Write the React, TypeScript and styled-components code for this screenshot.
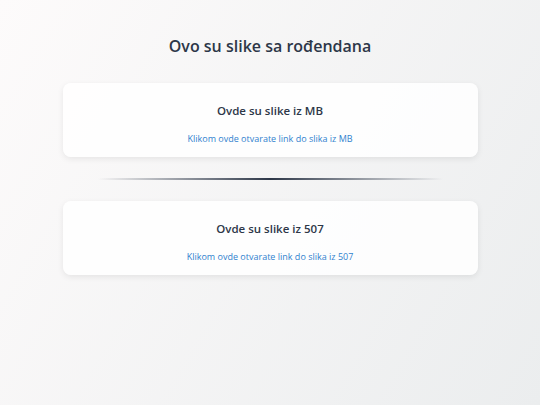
import styled, { createGlobalStyle } from 'styled-components';

const GlobalStyle = createGlobalStyle`
    html, body {
        margin: 0;
        padding: 0;
    }
    body {
        font-family: 'Open Sans', 'Liberation Sans', sans-serif;
        background: linear-gradient(120deg, #fdfbfb 0%, #ebedee 100%);
        min-height: 100vh;
    }
`;

const Page = styled.div`
    min-height: 100vh;
    display: flex;
    flex-direction: column;
    align-items: center;
    padding: 34px 0 0;
    box-sizing: border-box;
`;

const Title = styled.h1`
    margin: 0 0 25px;
    font-size: 16px;
    line-height: 24px;
    font-weight: 600;
    color: #2d3748;
`;

const Card = styled.div`
    width: 415px;
    box-sizing: border-box;
    background: rgba(255, 255, 255, 0.85);
    border-radius: 8px;
    box-shadow: 0 2px 6px rgba(0, 0, 0, 0.08);
    padding: 18px 20px 10px;
    display: flex;
    flex-direction: column;
    align-items: center;
`;

const CardTitle = styled.h2`
    margin: 0 0 10px;
    font-size: 11.5px;
    line-height: 20px;
    font-weight: 600;
    color: #2d3748;
`;

const CardLink = styled.a`
    font-size: 9px;
    line-height: 16px;
    color: #3182ce;
    text-decoration: none;
    cursor: pointer;
`;

const DividerRow = styled.div`
    display: flex;
    justify-content: center;
`;

const Divider = styled.hr`
    width: 345px;
    height: 2px;
    border: 0;
    margin: 21px 0 21px;
    background: linear-gradient(90deg, rgba(45, 55, 72, 0), #2d3748 50%, rgba(45, 55, 72, 0));
`;

const albums = [
    { name: 'MB' },
    { name: '507' },
];

export default function App() {
    return (
        <>
            <GlobalStyle />
            <Page>
                <Title>Ovo su slike sa rođendana</Title>
                {albums.map((a, i) => (
                    <div key={a.name}>
                        {i > 0 && <DividerRow><Divider /></DividerRow>}
                        <Card>
                            <CardTitle>Ovde su slike iz {a.name}</CardTitle>
                            <CardLink href="#">Klikom ovde otvarate link do slika iz {a.name}</CardLink>
                        </Card>
                    </div>
                ))}
            </Page>
        </>
    );
}
